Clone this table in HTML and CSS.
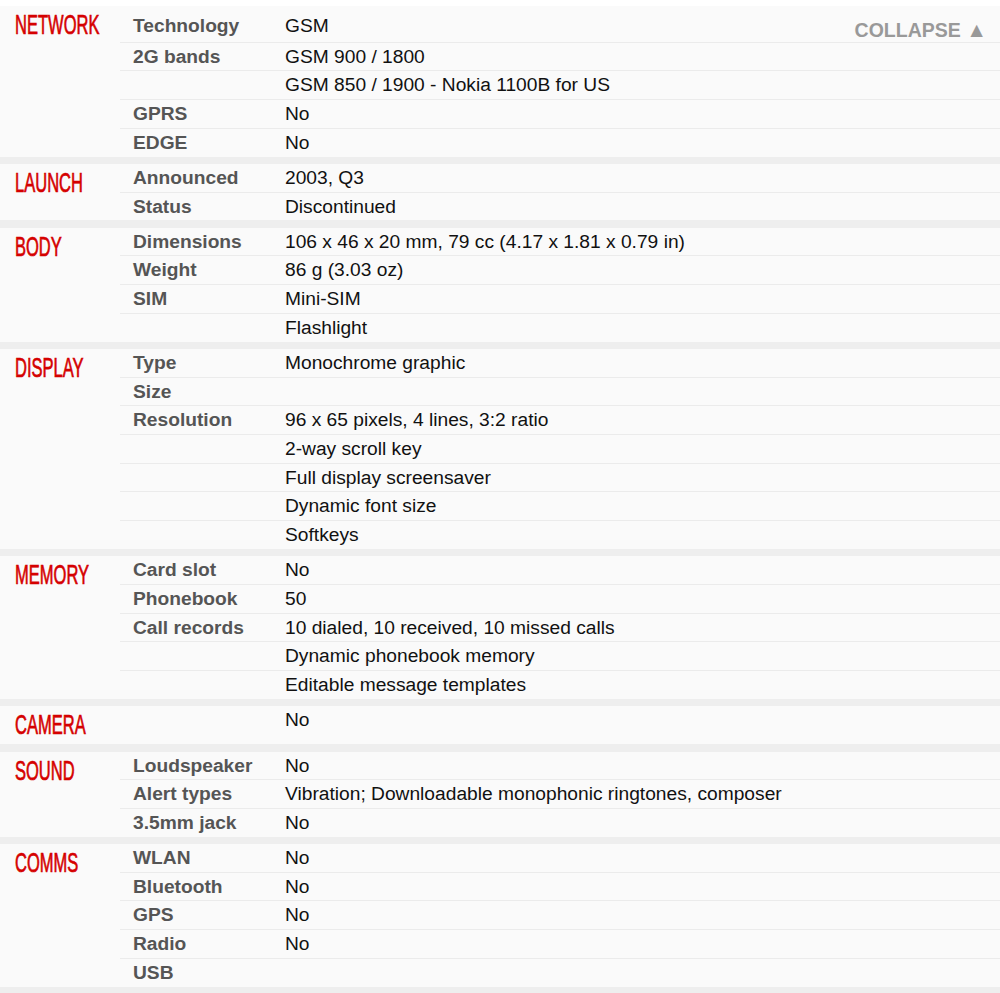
FILE: index.html
```html
<!DOCTYPE html>
<html>
<head>
<meta charset="utf-8">
<link rel="stylesheet" href="styles.css">
</head>
<body>
<div class="specs">
  <a class="collapse">COLLAPSE <span class="tri">▲</span></a>

  <section class="sec first">
    <h2 class="head"><span>NETWORK</span></h2>
    <div class="rows">
      <div class="row"><div class="lbl">Technology</div><div class="val">GSM</div></div>
      <div class="row"><div class="lbl">2G bands</div><div class="val">GSM 900 / 1800</div></div>
      <div class="row"><div class="lbl"></div><div class="val">GSM 850 / 1900 - Nokia 1100B for US</div></div>
      <div class="row"><div class="lbl">GPRS</div><div class="val">No</div></div>
      <div class="row"><div class="lbl">EDGE</div><div class="val">No</div></div>
    </div>
  </section>

  <section class="sec">
    <h2 class="head"><span>LAUNCH</span></h2>
    <div class="rows">
      <div class="row"><div class="lbl">Announced</div><div class="val">2003, Q3</div></div>
      <div class="row"><div class="lbl">Status</div><div class="val">Discontinued</div></div>
    </div>
  </section>

  <section class="sec">
    <h2 class="head"><span>BODY</span></h2>
    <div class="rows">
      <div class="row"><div class="lbl">Dimensions</div><div class="val">106 x 46 x 20 mm, 79 cc (4.17 x 1.81 x 0.79 in)</div></div>
      <div class="row"><div class="lbl">Weight</div><div class="val">86 g (3.03 oz)</div></div>
      <div class="row"><div class="lbl">SIM</div><div class="val">Mini-SIM</div></div>
      <div class="row"><div class="lbl"></div><div class="val">Flashlight</div></div>
    </div>
  </section>

  <section class="sec">
    <h2 class="head"><span>DISPLAY</span></h2>
    <div class="rows">
      <div class="row"><div class="lbl">Type</div><div class="val">Monochrome graphic</div></div>
      <div class="row"><div class="lbl">Size</div><div class="val"></div></div>
      <div class="row"><div class="lbl">Resolution</div><div class="val">96 x 65 pixels, 4 lines, 3:2 ratio</div></div>
      <div class="row"><div class="lbl"></div><div class="val">2-way scroll key</div></div>
      <div class="row"><div class="lbl"></div><div class="val">Full display screensaver</div></div>
      <div class="row"><div class="lbl"></div><div class="val">Dynamic font size</div></div>
      <div class="row"><div class="lbl"></div><div class="val">Softkeys</div></div>
    </div>
  </section>

  <section class="sec">
    <h2 class="head"><span>MEMORY</span></h2>
    <div class="rows">
      <div class="row"><div class="lbl">Card slot</div><div class="val">No</div></div>
      <div class="row"><div class="lbl">Phonebook</div><div class="val">50</div></div>
      <div class="row"><div class="lbl">Call records</div><div class="val">10 dialed, 10 received, 10 missed calls</div></div>
      <div class="row"><div class="lbl"></div><div class="val">Dynamic phonebook memory</div></div>
      <div class="row"><div class="lbl"></div><div class="val">Editable message templates</div></div>
    </div>
  </section>

  <section class="sec">
    <h2 class="head"><span>CAMERA</span></h2>
    <div class="rows">
      <div class="row"><div class="lbl"></div><div class="val">No</div></div>
    </div>
  </section>

  <section class="sec">
    <h2 class="head"><span>SOUND</span></h2>
    <div class="rows">
      <div class="row"><div class="lbl">Loudspeaker</div><div class="val">No</div></div>
      <div class="row"><div class="lbl">Alert types</div><div class="val">Vibration; Downloadable monophonic ringtones, composer</div></div>
      <div class="row"><div class="lbl">3.5mm jack</div><div class="val">No</div></div>
    </div>
  </section>

  <section class="sec">
    <h2 class="head"><span>COMMS</span></h2>
    <div class="rows">
      <div class="row"><div class="lbl">WLAN</div><div class="val">No</div></div>
      <div class="row"><div class="lbl">Bluetooth</div><div class="val">No</div></div>
      <div class="row"><div class="lbl">GPS</div><div class="val">No</div></div>
      <div class="row"><div class="lbl">Radio</div><div class="val">No</div></div>
      <div class="row"><div class="lbl">USB</div><div class="val"></div></div>
    </div>
  </section>
</div>
</body>
</html>
```

FILE: styles.css
```css
* { box-sizing: border-box; }
html, body {
  margin: 0;
  padding: 0;
  background: #ffffff;
}
body {
  font-family: "Liberation Sans", Arial, sans-serif;
  font-size: 19.2px;
}
.specs {
  position: relative;
  margin-top: 6px;
  background: #eeeeee;
  display: flex;
  flex-direction: column;
  gap: 7.4px;
  padding-bottom: 8px;
}
.collapse {
  position: absolute;
  top: 13px;
  right: 13px;
  font-weight: bold;
  font-size: 19.5px;
  line-height: 22px;
  color: #999999;
  text-decoration: none;
  z-index: 2;
}
.tri {
  font-size: 21px;
}
.sec {
  display: flex;
  background: #fafafa;
}
.head {
  margin: 0;
  width: 120px;
  flex: none;
  padding-left: 15px;
  font-weight: normal;
  font-size: 28px;
  line-height: 38px;
  height: 38px;
  color: #d50000;
  white-space: nowrap;
}
.head span {
  display: inline-block;
  transform: scaleX(0.59);
  transform-origin: left center;
  -webkit-text-stroke: 0.7px #d50000;
}
.rows {
  flex: 1;
  display: flex;
  flex-direction: column;
}
.first .rows {
  padding-top: 6px;
}
.first .row:first-child {
  padding-bottom: 2px;
}
.row {
  display: grid;
  grid-template-columns: 150px 1fr;
  line-height: 27.7px;
  min-height: 27.7px;
}
.row + .row {
  border-top: 1px solid #ebebeb;
}
.lbl {
  padding-left: 13px;
  font-weight: bold;
  color: #555555;
}
.val {
  padding-left: 15px;
  color: #111111;
}
```
